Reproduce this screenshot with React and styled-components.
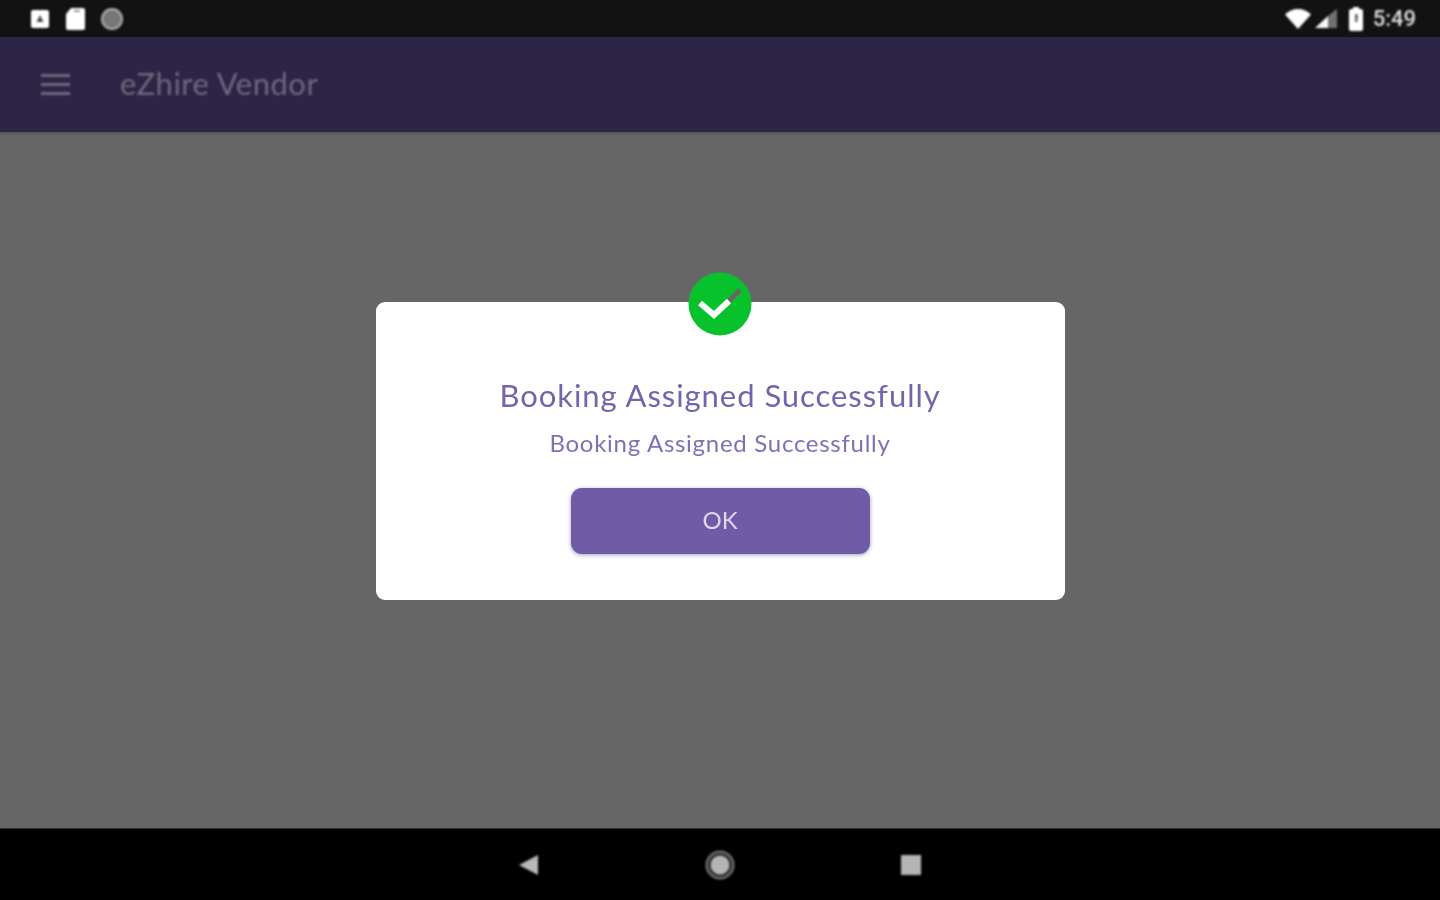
import React from "react";
import styled, { createGlobalStyle } from "styled-components";

const GlobalStyle = createGlobalStyle`
  html, body {
    margin: 0;
    padding: 0;
    height: 100%;
    background: #666666;
  }
  body {
    font-family: "Lato", "Liberation Sans", sans-serif;
  }
`;

const Screen = styled.div`
  width: 1440px;
  height: 900px;
  display: flex;
  flex-direction: column;
  overflow: hidden;
`;

const StatusBar = styled.div`
  height: 37px;
  flex: none;
  background: #121212;
  display: flex;
  align-items: center;
  justify-content: space-between;
  padding: 0 24px 0 30px;
`;

const StatusGroup = styled.div`
  display: flex;
  align-items: center;
  gap: ${(p) => p.$gap || 0}px;
`;

const Clock = styled.span`
  font-family: "Roboto", sans-serif;
  font-size: 22px;
  font-weight: 500;
  color: #e0e0e0;
  margin-left: 9px;
  filter: blur(0.8px);
`;

const AppBar = styled.header`
  height: 95px;
  flex: none;
  background: #2d2545;
  display: flex;
  align-items: center;
  padding: 0 0 3px 41px;
  box-sizing: border-box;
  box-shadow: 0 2px 3px rgba(0, 0, 0, 0.18);
  position: relative;
`;

const MenuIcon = styled.div`
  width: 29px;
  display: flex;
  flex-direction: column;
  gap: 6px;
  margin: 3px 50px 0 0;
  filter: blur(0.8px);

  span {
    display: block;
    height: 3px;
    background: #6f697e;
  }
`;

const AppTitle = styled.h1`
  margin: 0;
  font-size: 31px;
  font-weight: 400;
  letter-spacing: 0.5px;
  color: #6f697e;
  filter: blur(0.9px);
`;

const Scrim = styled.main`
  flex: 1;
  background: #666666;
  display: flex;
  align-items: center;
  justify-content: center;
`;

const Dialog = styled.section`
  position: relative;
  width: 689px;
  height: 298px;
  margin-bottom: 58px;
  box-sizing: border-box;
  padding-top: 74px;
  background: #ffffff;
  border-radius: 9px;
  display: flex;
  flex-direction: column;
  align-items: center;
`;

const Badge = styled.svg`
  position: absolute;
  top: -30px;
  left: 312px;
  width: 64px;
  height: 64px;
  filter: blur(0.5px);
`;

const DialogTitle = styled.h2`
  margin: 0;
  font-size: 31px;
  line-height: 38px;
  font-weight: 400;
  letter-spacing: 0.95px;
  color: #7564ab;
  filter: blur(0.7px);
`;

const DialogText = styled.p`
  margin: 14px 0 0;
  font-size: 24px;
  line-height: 30px;
  font-weight: 400;
  letter-spacing: 0.72px;
  color: #8070b4;
  filter: blur(0.7px);
`;

const OkButton = styled.button`
  width: 299px;
  height: 66px;
  margin-top: 30px;
  border: none;
  border-radius: 11px;
  background: #6f5ba6;
  color: #dcd8ea;
  font-family: inherit;
  font-size: 24px;
  box-shadow: 0 1px 4px rgba(60, 40, 110, 0.45);
  padding: 0 0 4px;

  span {
    filter: blur(0.7px);
    display: inline-block;
  }
`;

const NavBar = styled.nav`
  height: 72px;
  flex: none;
  background: #000000;
  border-top: 1px solid #2a2a2a;
  box-sizing: border-box;
  display: flex;
  align-items: center;
  justify-content: center;
  gap: 161px;
`;

const NavIcon = styled.svg`
  width: 30px;
  height: 32px;
  filter: blur(0.8px);
`;

const TopIcon = styled.svg`
  display: block;
  filter: blur(0.8px);
`;

function App() {
  return (
    <Screen>
      <GlobalStyle />
      <StatusBar>
        <StatusGroup $gap={14}>
          <TopIcon width="20" height="20" viewBox="0 0 20 20">
            <rect x="1" y="1" width="18" height="18" rx="2" fill="#fff" />
            <path d="M10 6l3.500 7h-7z" fill="#444" />
          </TopIcon>
          <TopIcon width="22" height="24" viewBox="0 0 22 24">
            <path d="M7 1h12a2 2 0 0 1 2 2v18a2 2 0 0 1-2 2H4a2 2 0 0 1-2-2V7z" fill="#fff" />
            <path d="M10 3h6v2h-6z" fill="#999" />
          </TopIcon>
          <TopIcon width="24" height="24" viewBox="0 0 24 24">
            <circle cx="12" cy="12" r="11" fill="#b0b0b0" />
            <circle cx="12" cy="12" r="9" fill="#777" />
          </TopIcon>
        </StatusGroup>
        <StatusGroup>
          <TopIcon width="28" height="22" viewBox="0 0 28 22">
            <path d="M1 6.500C4.500 3 9 1 14 1s9.500 2 13 5.500L14 21z" fill="#fff" />
          </TopIcon>
          <TopIcon width="24" height="20" viewBox="0 0 24 20" style={{ marginLeft: 2 }}>
            <path d="M1 19L14 7v12z" fill="#f8f8f8" />
            <path d="M14 7l9-7v19h-9z" fill="#707070" />
          </TopIcon>
          <TopIcon width="16" height="24" viewBox="0 0 16 24" style={{ marginLeft: 10 }}>
            <path d="M5 0h6v2h2a2 2 0 0 1 2 2v18a2 2 0 0 1-2 2H3a2 2 0 0 1-2-2V4a2 2 0 0 1 2-2h2z" fill="#fff" />
            <path d="M8 7a2 2 0 0 1 2 2v1a2 2 0 0 1-1 2 2 2 0 0 1 0 3H7V7z" fill="#666" />
          </TopIcon>
          <Clock>5:49</Clock>
        </StatusGroup>
      </StatusBar>

      <AppBar>
        <MenuIcon>
          <span />
          <span />
          <span />
        </MenuIcon>
        <AppTitle>eZhire Vendor</AppTitle>
      </AppBar>

      <Scrim>
        <Dialog>
          <Badge viewBox="0 0 64 64">
            <circle cx="32" cy="32" r="31.500" fill="#08c22c" />
            <path d="M40 30L52 18" fill="none" stroke="#666" strokeWidth="5" />
            <path d="M12 31L26 43L41 29" fill="none" stroke="#fff" strokeWidth="6" />
          </Badge>
          <DialogTitle>Booking Assigned Successfully</DialogTitle>
          <DialogText>Booking Assigned Successfully</DialogText>
          <OkButton>
            <span>OK</span>
          </OkButton>
        </Dialog>
      </Scrim>

      <NavBar>
        <NavIcon viewBox="0 0 30 32">
          <path d="M5 16L24 6v20z" fill="#b8b8b8" />
        </NavIcon>
        <NavIcon viewBox="0 0 30 32">
          <circle cx="15" cy="16" r="14.500" fill="#6e6e6e" />
          <circle cx="15" cy="16" r="12" fill="#2a2a2a" />
          <circle cx="15" cy="16" r="9.500" fill="#b4b4b4" />
        </NavIcon>
        <NavIcon viewBox="0 0 30 32">
          <rect x="5" y="6" width="20" height="20" fill="#b4b4b4" />
        </NavIcon>
      </NavBar>
    </Screen>
  );
}

export default App;
